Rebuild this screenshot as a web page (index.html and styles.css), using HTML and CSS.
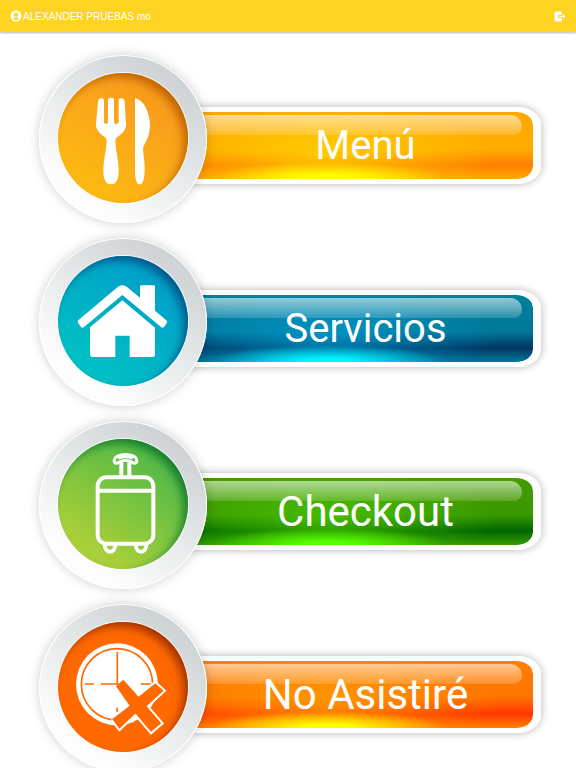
FILE: index.html
```html
<!DOCTYPE html>
<html lang="es">
<head>
<meta charset="utf-8">
<meta name="viewport" content="width=device-width, initial-scale=1">
<title>Menú principal</title>
<link rel="stylesheet" href="styles.css">
</head>
<body>
<header class="topbar">
  <div class="user">
    <svg class="user-icon" viewBox="0 0 24 24" aria-hidden="true"><path fill="currentColor" fill-rule="evenodd" d="M12 1a11 11 0 1 0 0 22 11 11 0 0 0 0-22zM12 5a4 4 0 1 1 0 9 4 4 0 0 1 0-9zM12 20c-3 0-5-1-6.500-3.500 2-1.300 4.500-1.700 6.500-1.700s4.500.4 6.500 1.700c-1.500 2.500-3.500 3.500-6.500 3.500z"/></svg>
    <span>ALEXANDER PRUEBAS mo</span>
  </div>
  <button class="logout" type="button" aria-label="Salir">
    <svg viewBox="0 0 24 22" aria-hidden="true"><path fill="currentColor" d="M3 1h11q2 0 2 2v5H8v6h8v5q0 2-2 2H3q-2 0-2-2V3q0-2 2-2z"/><path fill="currentColor" d="M10 10h8V6l5 5-5 5v-4h-8z"/></svg>
  </button>
</header>

<main class="options">
  <button class="option option-menu" type="button">
    <span class="dial"><span class="face">
      <svg viewBox="84 102 390 390" aria-hidden="true" fill="#fff">
        <path d="M204 188q1-9 10-10 8-1 8 6v65q0 6 6 6t6-6v-66q0-7 9-7t9 7v66q0 6 7 6t7-6v-65q0-7 8-6 9 1 10 10l4 65q1 17-9 27-9 9-18 15-6 4-5 14c2 30 10 57 10 85q0 42-23 42t-23-42c0-28 8-55 10-85q1-10-5-14-9-6-18-15-10-10-9-27z"/>
        <path d="M315 178c18 3 30 20 37 39 8 22 10 44 6 61-3 16-11 32-18 45-3 9 4 38 4 63q0 50-15 50t-14-50z"/>
      </svg>
    </span></span>
    <span class="bar"><span class="label">Menú</span></span>
  </button>

  <button class="option option-services" type="button">
    <span class="dial"><span class="face">
      <svg viewBox="84 96 390 390" aria-hidden="true" fill="#fff">
        <path d="M145 289 263 189q14-11 28 0l39 32v-33q0-4 4-4h37q4 0 4 4v72l34 29q5 4 1 9l-8 11q-4 4-9 0L277 213 162 309q-5 4-9 0l-8-11q-4-5 0-9z"/>
        <path d="m277 229 98 82v81q0 7-7 7h-69v-64h-43v64h-69q-7 0-7-7v-82z"/>
      </svg>
    </span></span>
    <span class="bar"><span class="label">Servicios</span></span>
  </button>

  <button class="option option-checkout" type="button">
    <span class="dial"><span class="face">
      <svg viewBox="91 88 390 390" aria-hidden="true" fill="none" stroke="#fff" stroke-width="12" stroke-linejoin="round">
        <rect x="210" y="203" width="167" height="199" rx="26"/>
        <path d="M210 243h167M281 202v-44M305 202v-44"/>
        <path stroke-width="9" d="M260 151c3-22 64-22 67 0 2 11-9 12-15 6-7-6-29-6-37 0-7 6-17 5-15-6zM272 145q21-7 43 0"/>
        <path d="M231 403c0 31 32 31 32 0M324 403c0 31 32 31 32 0"/>
      </svg>
    </span></span>
    <span class="bar"><span class="label">Checkout</span></span>
  </button>

  <button class="option option-absent" type="button">
    <span class="dial"><span class="face">
      <svg viewBox="84 95 390 390" aria-hidden="true">
        <circle cx="261" cy="282" r="123" fill="#fff"/>
        <circle cx="261" cy="282" r="107" fill="none" stroke="#ff6900" stroke-width="5"/>
        <path d="M262 185v97M164 281h28M212 281h54M332 281h30M261 352v12" fill="none" stroke="#ff6900" stroke-width="5"/>
        <path d="m258 288 22-20 44 49 52-42 29 26-51 47 44 51-35 30-47-55-48 46-24-32 55-42z" fill="#ff6900"/>
        <path d="m324 317 52-42 29 26-51 47 44 51-35 30-47-55-48 46-24-32" fill="none" stroke="#fff" stroke-width="6"/>
      </svg>
    </span></span>
    <span class="bar"><span class="label">No Asistiré</span></span>
  </button>
</main>
</body>
</html>
```

FILE: styles.css
```css
* {
  box-sizing: border-box;
}

body {
  margin: 0;
  height: 100vh;
  display: flex;
  flex-direction: column;
  background: #fff;
  font-family: Roboto, sans-serif;
}

button {
  border: 0;
  padding: 0;
  background: none;
  font: inherit;
  color: inherit;
  cursor: pointer;
}

.topbar {
  flex: none;
  display: flex;
  align-items: center;
  justify-content: space-between;
  height: 32px;
  padding: 0 10px;
  background: #fcd421;
  color: #fff;
  box-shadow: 0 1px 2px rgba(0, 0, 0, 0.3);
  font-family: "Liberation Sans", Arial, sans-serif;
  font-size: 10px;
}

.user {
  display: flex;
  align-items: center;
  gap: 1px;
}

.user-icon {
  width: 12px;
  height: 12px;
}

.logout svg {
  display: block;
  width: 12px;
  height: 11px;
}

.options {
  flex: 1;
  min-height: 0;
  display: flex;
  flex-direction: column;
  gap: 15px;
  padding: 23px 35px 23px 39px;
  overflow-y: auto;
  scrollbar-width: none;
}

.option {
  flex: none;
  display: flex;
  align-items: center;
  width: 100%;
}

.dial {
  position: relative;
  z-index: 1;
  flex: none;
  display: flex;
  justify-content: center;
  width: 168px;
  height: 168px;
  padding-top: 18px;
  border-radius: 50%;
  background: linear-gradient(215deg, #cdd2d4 15%, #e4e7e8 45%, #fdfdfd 80%);
  box-shadow: inset 0 0 0 1px #fff, 0 0 12px rgba(0, 0, 0, 0.2);
}

.face {
  width: 130px;
  height: 130px;
  border-radius: 50%;
  background: linear-gradient(35deg, var(--face-low) 20%, var(--face-high) 85%);
  box-shadow: inset -5px 5px 10px -1px var(--face-shade), 0 0 0 1px rgba(255, 255, 255, 0.8);
}

.face svg {
  display: block;
  width: 100%;
  height: 100%;
}

.bar {
  position: relative;
  flex: 1;
  display: flex;
  align-items: center;
  justify-content: center;
  height: 77px;
  margin: 12px 0 0 -17px;
  padding: 2px 0 0 8px;
  border: solid #fff;
  border-width: 5px 8px 5px 0;
  border-radius: 0 24px 24px 0 / 0 18px 18px 0;
  background:
    radial-gradient(ellipse 120px 17px at 40% 100%, var(--glow) 20%, transparent 100%) padding-box,
    radial-gradient(ellipse 170px 50px at 40% 60%, var(--halo), transparent) padding-box,
    linear-gradient(var(--bar-top), var(--bar-mid) 55%, var(--bar-dark) 79%, var(--bar-low)) padding-box;
  box-shadow: 0 0 8px rgba(0, 0, 0, 0.3);
}

/* Glass highlight along the top of the bar */
.bar::before {
  content: "";
  position: absolute;
  inset: 3px 11px auto 0;
  height: 20px;
  border-radius: 0 14px 10px 0;
  background: linear-gradient(rgba(255, 255, 255, 0.58), rgba(255, 255, 255, 0.16));
}

.label {
  position: relative;
  color: #fff;
  font-size: var(--label-size);
  line-height: 48px;
}

.option-menu,
.option-services {
  --label-size: 40px;
}

.option-checkout,
.option-absent {
  --label-size: 42px;
}

.option-menu {
  --face-low: #fdb813;
  --face-high: #f7981d;
  --face-shade: #bd6200;
  --bar-top: #ffa800;
  --bar-mid: #ffac00;
  --bar-dark: #ff7e00;
  --bar-low: #ffaa00;
  --halo: rgba(255, 208, 0, 0.85);
  --glow: #ffff00;
}

.option-services {
  --face-low: #00bfc4;
  --face-high: #009dc9;
  --face-shade: #005488;
  --bar-top: #00809b;
  --bar-mid: #007797;
  --bar-dark: #003662;
  --bar-low: #007a9c;
  --halo: rgba(0, 155, 210, 0.75);
  --glow: #00f6ff;
}

.option-checkout {
  --face-low: #a9cf38;
  --face-high: #4db848;
  --face-shade: #187b2c;
  --bar-top: #469b00;
  --bar-mid: #3a9800;
  --bar-dark: #006500;
  --bar-low: #369c00;
  --halo: rgba(75, 200, 0, 0.75);
  --glow: #55ff00;
}

.option-absent {
  --face-low: #ff6900;
  --face-high: #ff6900;
  --face-shade: #a03000;
  --bar-top: #ff8000;
  --bar-mid: #ff7200;
  --bar-dark: #ff3600;
  --bar-low: #ff8200;
  --halo: rgba(255, 160, 0, 0.8);
  --glow: #ffff00;
}
```
